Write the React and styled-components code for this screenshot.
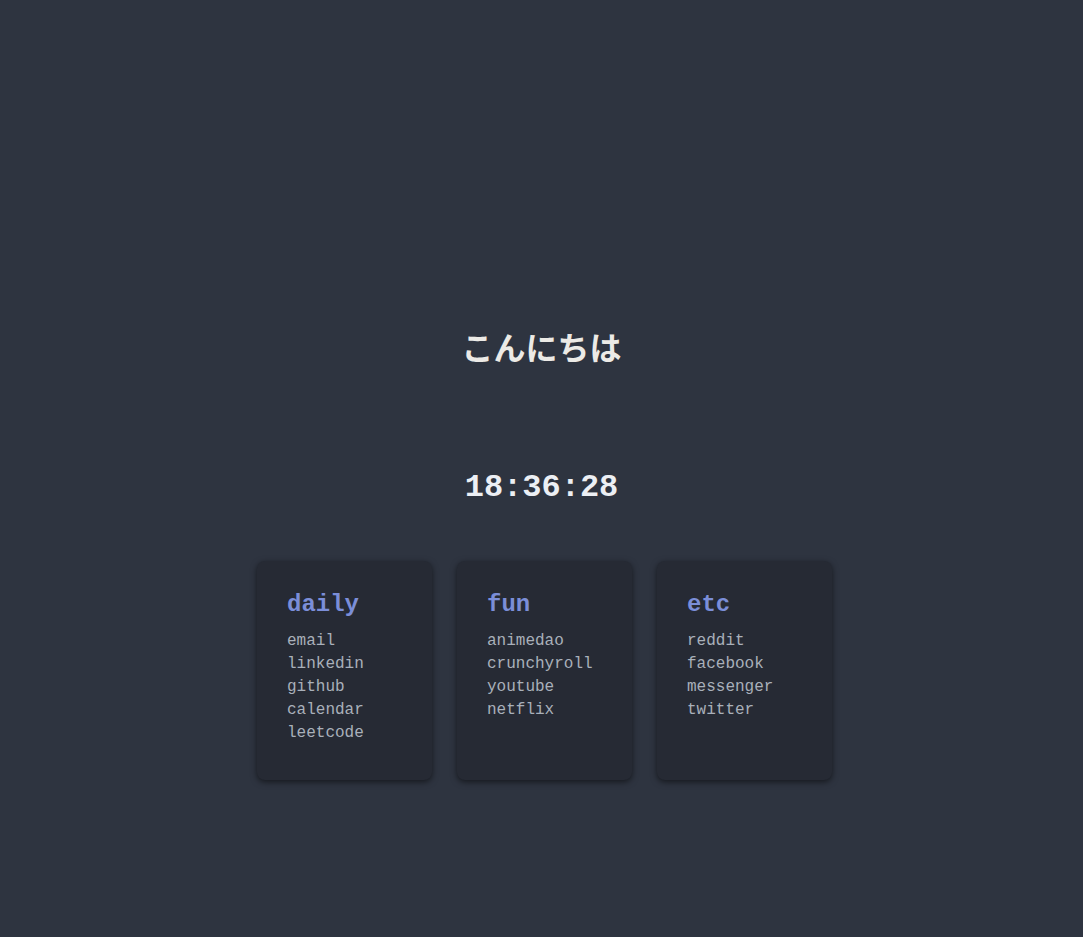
import React from 'react';
import styled, { createGlobalStyle } from "styled-components";

const GlobalStyle = createGlobalStyle`
  html, body {
    margin: 0;
    padding: 0;
    background: #2e3440;
  }
`

const Page = styled.div`
  min-height: 100vh;
  box-sizing: border-box;
  padding-top: 326px;
  display: flex;
  flex-direction: column;
  align-items: center;
  font-family: "Liberation Mono", "Courier New", monospace;`

const Greeting = styled.h1`
  margin: 0;
  font-family: "Noto Sans CJK JP", sans-serif;
  font-size: 32px;
  line-height: 40px;
  font-weight: 700;
  color: #eceae6;`

const Clock = styled.div`
  margin-top: 102px;
  font-size: 32px;
  line-height: 40px;
  font-weight: 700;
  color: #eceff4;`

const Row = styled.div`
  margin-top: 53px;
  margin-left: 6px;
  display: flex;
  gap: 25px;`

const Card = styled.div`
  width: 175px;
  height: 219px;
  box-sizing: border-box;
  padding: 30px 30px;
  background: #262a34;
  border-radius: 8px;
  box-shadow: 0 2px 6px rgba(0, 0, 0, 0.55);`

const Title = styled.h3`
  margin: 0 0 11px;
  font-size: 24px;
  line-height: 28px;
  font-weight: 700;
  color: #7b8ed8;`

const Links = styled.ul`
  list-style: none;
  margin: 0;
  padding: 0;`

const Link = styled.li`
  font-size: 16px;
  line-height: 23px;
  color: #a9b0ba;`

const groups = [
  { name: "daily", links: ["email", "linkedin", "github", "calendar", "leetcode"] },
  { name: "fun", links: ["animedao", "crunchyroll", "youtube", "netflix"] },
  { name: "etc", links: ["reddit", "facebook", "messenger", "twitter"] },
]

const App = () => {
  return (
    <Page>
      <GlobalStyle />
      <Greeting>こんにちは</Greeting>
      <Clock>18:36:28</Clock>
      <Row>
        {groups.map(g => (
          <Card key={g.name}>
            <Title>{g.name}</Title>
            <Links>
              {g.links.map(l => <Link key={l}>{l}</Link>)}
            </Links>
          </Card>
        ))}
      </Row>
    </Page>
  )
}
export default App;
